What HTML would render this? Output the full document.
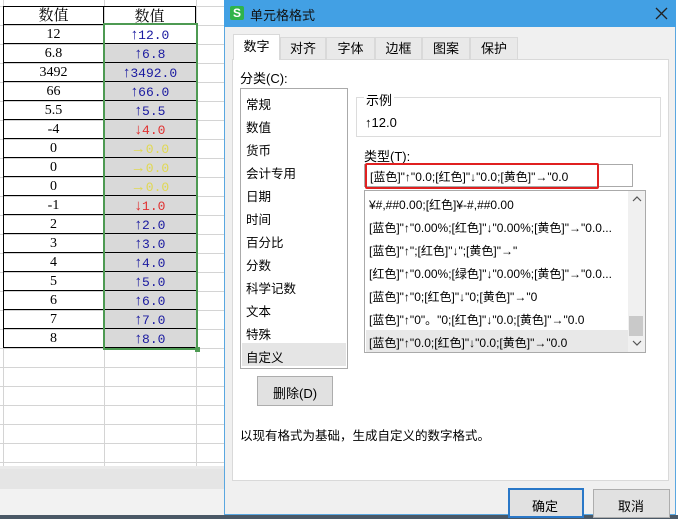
<!DOCTYPE html>
<html><head><meta charset="utf-8"><style>
*{margin:0;padding:0;box-sizing:border-box}
body{width:678px;height:519px;position:relative;overflow:hidden;background:#fff;font-family:"Liberation Sans","Noto Sans CJK SC",sans-serif;font-size:12px;color:#000}
.a{position:absolute}
.cell{position:absolute;height:19px;line-height:19px;text-align:center;font-family:"Liberation Serif","Noto Serif CJK SC",serif;font-size:14px}
.m{font-family:"Liberation Mono","Noto Sans CJK SC",monospace;font-size:13px}
.t{position:absolute;white-space:nowrap}
</style></head><body>
<div class="a" style="left:0;top:0;width:224px;height:468px;
background-image:linear-gradient(#d4d4d4 1px,transparent 1px);background-size:100% 19px;background-position:0 6px"></div>
<div class="a" style="left:3px;top:0;width:1px;height:468px;background:#d4d4d4"></div>
<div class="a" style="left:104px;top:0;width:1px;height:468px;background:#d4d4d4"></div>
<div class="a" style="left:196px;top:0;width:1px;height:468px;background:#d4d4d4"></div>
<div class="a" style="left:105px;top:44px;width:91px;height:305px;background:#d9d9d9"></div>
<div id="tbl"></div>
<div class="a" style="left:103px;top:23px;width:95px;height:327px;border:2px solid #4d9a52"></div>
<div class="a" style="left:195px;top:347px;width:5px;height:5px;background:#4d9a52"></div>
<div class="a" style="left:0;top:466px;width:224px;height:3px;background:#eaeaea"></div>
<div class="a" style="left:0;top:469px;width:224px;height:20px;background:#e5e5e5"></div>
<div class="a" style="left:0;top:489px;width:224px;height:26px;background:#f2f2f2"></div>
<div class="a" style="left:0;top:515px;width:678px;height:4px;background:#4a5866"></div>
<div class="a" style="left:224px;top:0;width:452px;height:515px;background:#f0f0f0;border:1px solid #5aa7e0;border-top:none"></div>
<div class="a" style="left:224px;top:0;width:452px;height:27px;background:#42a0e4"></div>
<div class="a" style="left:230px;top:6px;width:14px;height:14px;background:#2fb34a;border-radius:2px;color:#fff;font-size:12px;font-weight:bold;line-height:14px;text-align:center">S</div>
<div class="t" style="left:250px;top:5px;font-size:13px;color:#111">单元格格式</div>
<svg class="a" style="left:655px;top:7px" width="13" height="13" viewBox="0 0 13 13"><path d="M1 1L12 12M12 1L1 12" stroke="#222" stroke-width="1.3"/></svg>
<div class="a" style="left:232px;top:59px;width:437px;height:422px;background:#fff;border:1px solid #d9d9d9"></div>
<div id="tabs"></div>
<div class="t" style="left:240px;top:68px;font-size:13px">分类(C):</div>
<div class="a" style="left:240px;top:88px;width:108px;height:281px;background:#fff;border:1px solid #aaa"></div>
<div class="a" style="left:242px;top:343px;width:104px;height:23px;background:#e5e5e5"></div>
<div id="cats"></div>
<div class="a" style="left:356px;top:97px;width:305px;height:40px;border:1px solid #dcdcdc"></div>
<div class="t" style="left:364px;top:90px;background:#fff;padding:0 2px;font-size:13px">示例</div>
<div class="t" style="left:365px;top:115px;font-size:13px">↑12.0</div>
<div class="t" style="left:364px;top:146px;font-size:13px">类型(T):</div>
<div class="a" style="left:364px;top:164px;width:269px;height:23px;background:#fff;border:1px solid #aaa"></div>
<div class="a" style="left:365px;top:163px;width:234px;height:26px;border:2px solid #e02020;border-radius:2px"></div>
<div class="t" style="left:370px;top:168px">[蓝色]"↑"0.0;[红色]"↓"0.0;[黄色]"→"0.0</div>
<div class="a" style="left:364px;top:190px;width:282px;height:163px;background:#fff;border:1px solid #aaa"></div>
<div class="a" style="left:366px;top:330px;width:262px;height:22px;background:#e8e8e8"></div>
<div class="a" style="left:628px;top:191px;width:17px;height:161px;background:#f0f0f0"></div>
<div class="a" style="left:629px;top:316px;width:14px;height:20px;background:#c9c9c9"></div>
<svg class="a" style="left:632px;top:196px" width="10" height="6"><path d="M1 5L5 1L9 5" fill="none" stroke="#555" stroke-width="1.2"/></svg>
<svg class="a" style="left:632px;top:340px" width="10" height="6"><path d="M1 1L5 5L9 1" fill="none" stroke="#555" stroke-width="1.2"/></svg>
<div id="fmts"></div>
<div class="a" style="left:257px;top:376px;width:76px;height:30px;background:#e1e1e1;border:1px solid #adadad"></div>
<div class="t" style="left:273px;top:383px;font-size:13px">删除(D)</div>
<div class="t" style="left:240px;top:425px;font-size:12.5px">以现有格式为基础，生成自定义的数字格式。</div>
<div class="a" style="left:508px;top:488px;width:76px;height:30px;background:#e1e1e1;border:2px solid #2a78c8"></div>
<div class="t" style="left:532px;top:496px;font-size:13px">确定</div>
<div class="a" style="left:593px;top:489px;width:77px;height:29px;background:#e1e1e1;border:1px solid #adadad"></div>
<div class="t" style="left:618px;top:496px;font-size:13px">取消</div>
<script>
var A=["数值","12","6.8","3492","66","5.5","-4","0","0","0","-1","2","3","4","5","6","7","8"];
var B=[["","数值","#000"],["↑","12.0","#1a1aa0"],["↑","6.8","#1a1aa0"],["↑","3492.0","#1a1aa0"],["↑","66.0","#1a1aa0"],["↑","5.5","#1a1aa0"],["↓","4.0","#e03030"],["→","0.0","#e0d850"],["→","0.0","#e0d850"],["→","0.0","#e0d850"],["↓","1.0","#e03030"]];
for(var i=2;i<=8;i++)B.push(["↑",i+".0","#1a1aa0"]);
var h="";
for(var i=0;i<18;i++){var y=6+i*19;
h+='<div class="cell" style="left:3px;top:'+y+'px;width:101px;border-bottom:1px solid #000;border-left:1px solid #000;border-right:1px solid #000'+(i==0?';border-top:1px solid #000;font-size:15px':'')+'">'+A[i]+'</div>';
var b=B[i];h+='<div class="cell'+(i?' m':'')+'" style="left:104px;top:'+y+'px;width:92px;color:'+b[2]+';'+(i==0?'border:1px solid #000;border-left:none;font-size:15px':'border-bottom:1px solid #000')+(i==1?';background:#fff':'')+'"><span style="font-family:Liberation Sans,sans-serif;font-size:15px">'+b[0]+'</span>'+b[1]+'</div>';}
document.getElementById("tbl").innerHTML=h;
var T=[["数字",233,47],["对齐",280,46],["字体",326,49],["边框",375,47],["图案",422,48],["保护",470,48]];h="";
T.forEach(function(t,i){h+='<div class="a" style="left:'+t[1]+'px;top:'+(i?37:34)+'px;width:'+t[2]+'px;height:'+(i?22:26)+'px;background:'+(i?'#e9e9e9':'#fff')+';border:1px solid #d9d9d9;border-bottom:none;text-align:center;line-height:'+(i?21:24)+'px;font-size:13px">'+t[0]+'</div>';});
document.getElementById("tabs").innerHTML=h;
var C=["常规","数值","货币","会计专用","日期","时间","百分比","分数","科学记数","文本","特殊","自定义"];h="";
C.forEach(function(c,i){h+='<div class="t" style="left:246px;top:'+(94+i*23)+'px;font-size:12.5px">'+c+'</div>';});
document.getElementById("cats").innerHTML=h;
var F=['¥#,##0.00;[红色]¥-#,##0.00','[蓝色]"↑"0.00%;[红色]"↓"0.00%;[黄色]"→"0.0...','[蓝色]"↑";[红色]"↓";[黄色]"→"','[红色]"↑"0.00%;[绿色]"↓"0.00%;[黄色]"→"0.0...','[蓝色]"↑"0;[红色]"↓"0;[黄色]"→"0','[蓝色]"↑"0"。"0;[红色]"↓"0.0;[黄色]"→"0.0','[蓝色]"↑"0.0;[红色]"↓"0.0;[黄色]"→"0.0'];h="";
F.forEach(function(f,i){h+='<div class="t" style="left:369px;top:'+(196+i*23)+'px">'+f+'</div>';});
document.getElementById("fmts").innerHTML=h;
</script>
</body></html>
